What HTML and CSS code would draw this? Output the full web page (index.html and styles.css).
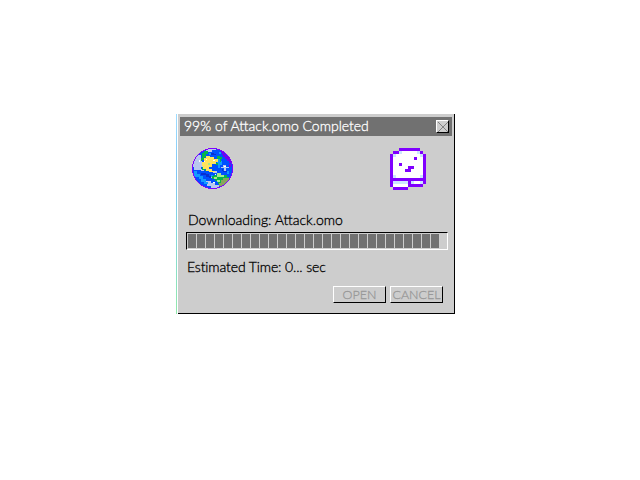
FILE: index.html
```
<!DOCTYPE html>
<html lang="en">
<head>
<meta charset="utf-8">
<title>Download</title>
<link rel="stylesheet" href="styles.css">
</head>
<body>
<main class="dialog">
  <header class="titlebar">
    <span class="title">99% of Attack.omo Completed</span>
    <button class="close" aria-label="Close"><svg width="10" height="10" viewBox="0 0 10 10"><path d="M0 0L10 10M10 0L0 10"/></svg></button>
  </header>
  <div class="icons">
    <svg class="globe" width="41" height="41" viewBox="18 18 123 123" shape-rendering="crispEdges">
      <defs><clipPath id="disc"><circle cx="79.5" cy="79.5" r="60"/></clipPath></defs>
      <g clip-path="url(#disc)">
        <path fill="#0050ff" d="M18 18h123v123H18z"/>
        <path fill="#b8c8ee" d="M36 39h9v12h3v12h6v12h-9v6h9v6h-9v-3H24v-9h-6V54h9V42h9zM60 21h30v3H78v6H66v-3h-6zM81 87h12v6H81zM60 117h15v6h12v6h12v9H75v-6H63v-6h-3zM111 69h9v6h9v3h-9v9h-6v-9h-9v-3h6zM33 99h6v3h6v3H33zM72 102h6v6h-6z"/>
        <path fill="#139bff" d="M24 87h9v9h9v6h9v9h9v9h6v6H54v-6h-9v-9h-6v-6H24zM93 48h9v9h6v12h-6v9h-6V66h-3zM75 99h6v6h-6zM99 30h6v6h-6zM123 87h6v9h-6zM69 33h6v6h-6z"/>
        <path fill="#05b64a" d="M48 33h6v-6h12v9h-6v9h-3v9h-9v3h-3v-9h3zM93 42h9v3h6v6h-3v9h-3v-9h-9zM48 75h9v9h9v3h-9v-3h-9zM84 99h21v6h9v-6h9v6h6v12h-9v9H96v-9h-9v-6h-9v-9h6zM90 63h6v6h-6z"/>
        <path fill="#ffe45c" d="M60 42h12v3h12v6h12v9h-6v6H78v9h-9v6h9v6h9v3H69v-3h-9v-6h-9v-9h-3V60h6V48h6z"/>
        <path fill="#a6e890" d="M93 93h12v6h9v6H93v6h-9v-6h9zM66 63h6v6h-6zM93 114h9v6h-9z"/>
        <path fill="#88a55b" d="M111 108h21v9h-9v9h-9v6H99v-9h6v-9h6z"/>
        <path fill="#0730d0" d="M75 33h9v3h6v3H75zM45 93h15v3h9v6h6v6h-6v-3h-9v-6H45zM108 81h3v6h12v3h-12v-3h-3z"/>
        <path fill="#7400f0" d="M105 27h9v9h6v6h9v9h6v12h-6v-6h-6v-6h-6v-6h-6v-6h-3zM129 66h6v9h-6z"/>
        <path fill="#fff" d="M54 57h3v3h-3zM81 54h6v3h-6zM39 54h3v6h-3zM81 120h6v3h-6zM114 72h6v3h-6zM60 51h3v3h-3zM87 96h3v3h-3z"/>
      </g>
      <circle cx="79.5" cy="79.5" r="60" fill="none" stroke="#8000ff" stroke-width="3"/>
    </svg>
    <svg class="face" width="36" height="42" viewBox="0 0 12 14" shape-rendering="crispEdges">
      <path fill="#fff" d="M3 1h7v1h1v8H1V2h2zM1 12h5v1H1z"/>
      <path fill="#cce6ff" d="M3 1h1v1H3zM9 1h1v1H9zM1 2h1v1H1zM10 2h1v1h-1zM1 9h1v1H1zM10 9h1v1h-1zM1 11h5v1H1z"/>
      <path fill="#8000ff" d="M3 0h7v1H3zM1 1h2v1H1zM10 1h1v1h-1zM0 2h1v8h10V2h1v10h-1v1H6v-2H1v2H0zM8 3h1v1H8zM3 5h1v1H3zM6 6h2v1H6zM5 7h2v1H5zM1 13h5v1H1z"/>
      <path fill="#fff" d="M7 11h4v1H7z"/><path fill="#cce6ff" d="M7 11h1v1H7zM10 11h1v1h-1z"/>
    </svg>
  </div>
  <div class="status">Downloading: Attack.omo</div>
  <div class="progress"></div>
  <div class="estimate">Estimated Time: 0... sec</div>
  <footer class="actions">
    <button class="btn open" disabled><span>OPEN</span></button>
    <button class="btn cancel" disabled><span>CANCEL</span></button>
  </footer>
</main>
</body>
</html>
```
FILE: styles.css
```
* { box-sizing: border-box; }
body { margin: 0; background: #fff; font-family: Lato, "Liberation Sans", sans-serif; font-size: 14px; font-weight: 300; color: #000; -webkit-text-stroke: 0.3px; }
.dialog {
  width: 279px; height: 200px; margin: 114px 0 0 176px; padding: 3px 2px 0 4px;
  display: flex; flex-direction: column;
  border-right: 1px solid #000;
  background:
    linear-gradient(#000, #000) 2px 199px / 277px 1px no-repeat,
    linear-gradient(#9edcff, #80c8f4 30%, #82d7e2 55%, #92e8ac) 0 0 / 1px 200px no-repeat,
    linear-gradient(#fff, #fff) 1px 0 / 1px 200px no-repeat,
    #cdcdcd;
}
.titlebar { height: 19px; display: flex; align-items: center; justify-content: space-between; padding: 0 3px 0 4px; background: #717171; color: #fff; }
.title, .status, .estimate { white-space: nowrap; line-height: 18px; }
.title { margin-top: -2px; }
.close { width: 13px; height: 13px; padding: 1px; border: 1px solid; border-color: #fff #000 #000 #fff; background: #cdcdcd; display: grid; place-items: center; }
.close svg { display: block; fill: none; stroke: #808080; }
.icons { display: flex; justify-content: space-between; align-items: flex-start; margin: 12px 26px 0 12px; height: 42px; }
.status { margin: 21px 0 0 8px; }
.progress {
  width: 262px; height: 18px; margin: 3px 0 0 6px; flex: none;
  border: 1px solid; border-color: #000 #fff #fff #000;
  background: repeating-linear-gradient(90deg, #717171 0 8px, #cdcdcd 8px 9px) 1px 1px / 251px 14px no-repeat;
}
.estimate { margin: 8px 0 0 7px; letter-spacing: -0.12px; }
.actions { display: flex; gap: 4px; margin: 10px 0 0 153px; }
.btn { height: 17px; padding: 0; border: 1px solid; border-color: #fff #000 #000 #fff; background: #cdcdcd; color: #999; font: 300 12.5px/15px Lato, "Liberation Sans", sans-serif; }
.open { width: 53px; }
.cancel { width: 53px; }
```
